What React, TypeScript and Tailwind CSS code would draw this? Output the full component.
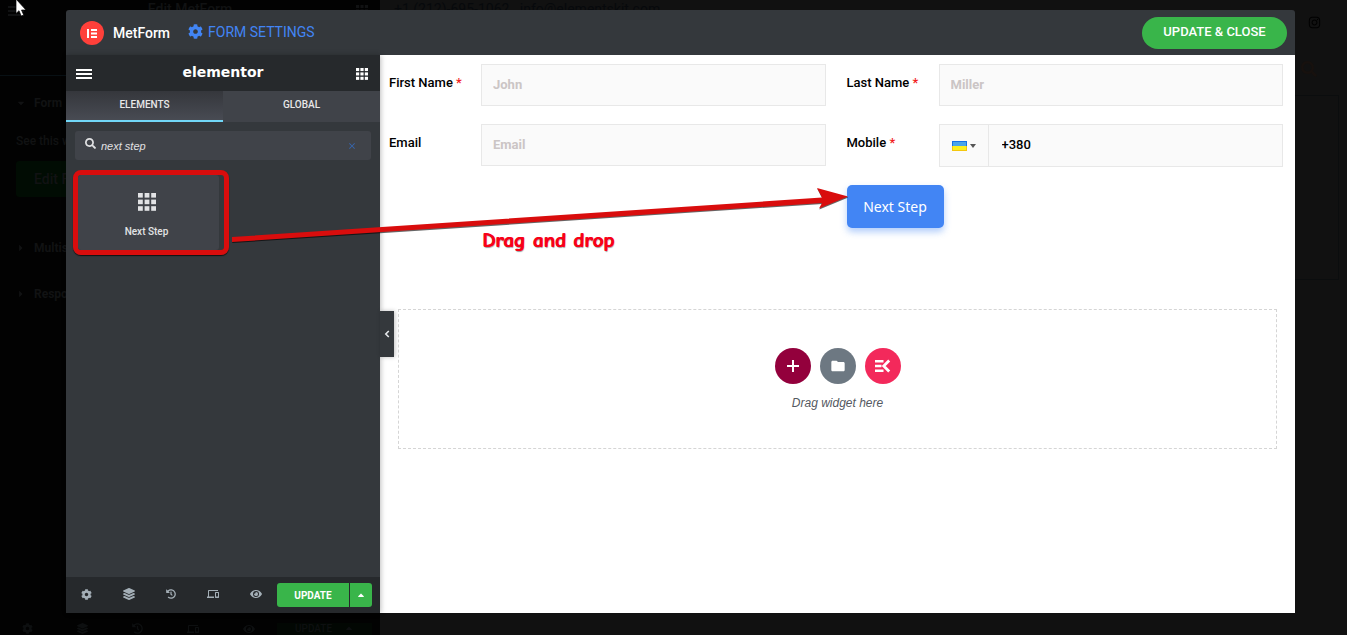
import type { ReactNode } from "react";
import {
  FaCaretDown,
  FaCaretRight,
  FaCaretUp,
  FaCog,
  FaEye,
  FaHistory,
  FaInstagram,
  FaLayerGroup,
  FaSearch,
} from "react-icons/fa";
import { MdClose, MdDevices, MdFolder } from "react-icons/md";

function AppsIcon({ className }: { className: string }) {
  return (
    <svg viewBox="0 0 18 18" className={className} fill="currentColor" aria-hidden="true">
      {[0, 6.6, 13.2].map((y) =>
        [0, 6.6, 13.2].map((x) => <rect key={`${x}-${y}`} x={x} y={y} width="4.8" height="4.6" />),
      )}
    </svg>
  );
}

function MenuIcon({ className }: { className: string }) {
  return (
    <svg viewBox="0 0 16 12" className={className} fill="currentColor" aria-hidden="true">
      <path d="M0 1h16v2H0zM0 5h16v2H0zM0 9h16v2H0z" />
    </svg>
  );
}

function ElementorMark() {
  return (
    <svg viewBox="0 0 24 24" className="size-6" aria-hidden="true">
      <circle cx="12" cy="12" r="12" fill="#ff403a" />
      <path d="M7 8h2v9H7zM11 8h6v2h-6zM11 11.5h6v2h-6zM11 15h6v2h-6z" fill="#fff" />
    </svg>
  );
}

function KitMark() {
  return (
    <svg viewBox="0 0 16 14" className="h-[14px] w-4" fill="none" stroke="#fff" aria-hidden="true">
      <path d="M0 2.2h8.5M0 7h6.5M0 11.8h8.5" strokeWidth="2.4" />
      <path d="M14.2 1.4 8.7 7l5.5 5.6" strokeWidth="2.8" />
    </svg>
  );
}

function Flag() {
  return (
    <svg viewBox="0 0 15 10" className="h-[10px] w-[15px]" aria-hidden="true">
      <rect width="15" height="5" fill="#1672e6" />
      <rect y="5" width="15" height="5" fill="#f4c70f" />
      <rect x="1" y="1" width="13" height="4" fill="#4aa5ea" />
      <rect x="1" y="5" width="13" height="4" fill="#fdf01d" />
    </svg>
  );
}

function Backdrop() {
  return (
    <div className="absolute inset-0 flex overflow-hidden bg-[#111111] text-[#101112]" aria-hidden="true">
      <div className="flex w-[380px] shrink-0 flex-col bg-[#020202] text-xs font-medium text-[#111213]">
        <div className="flex h-[76px] items-start justify-between border-b border-[#081014] pr-3 pl-2">
          <MenuIcon className="mt-[5px] h-3 w-4" />
          <span className="pt-px text-sm leading-4">Edit MetForm</span>
          <AppsIcon className="mt-[5px] size-3" />
        </div>
        <div className="flex h-[54px] items-center gap-2 pl-4">
          <FaCaretDown className="size-[10px]" />
          <span className="font-bold">Form</span>
        </div>
        <p className="pl-4 leading-[22px]">See this widget</p>
        <div className="mt-[9px] ml-4 flex h-9 w-40 items-center rounded-[3px] bg-[#010c03] pl-[18px] text-sm">
          Edit Form
        </div>
        <div className="mt-7 flex h-[46px] items-center gap-2 pl-4">
          <FaCaretRight className="size-[10px]" />
          <span className="font-bold">Multistep</span>
        </div>
        <div className="flex h-[46px] items-center gap-2 pl-4">
          <FaCaretRight className="size-[10px]" />
          <span className="font-bold">Response</span>
        </div>
        <div className="mt-auto flex h-[22px] items-end overflow-hidden pr-2 text-[#0d0f10]">
          <div className="flex flex-1 justify-around">
            <FaCog className="size-[11px]" />
            <FaLayerGroup className="size-[11px]" />
            <FaHistory className="size-[11px]" />
            <MdDevices className="size-3" />
            <FaEye className="size-3" />
          </div>
          <span className="flex w-[95px] justify-between bg-[#020703] px-[18px] text-[10px] leading-3">
            UPDATE
            <FaCaretUp className="size-[10px]" />
          </span>
        </div>
      </div>
      <div className="flex min-w-0 flex-1 justify-between pl-[14px] text-[#07090c]">
        <span className="pt-px text-sm leading-4">+1 (212)-695-1062 &nbsp; info@elementskit.com</span>
        <div className="flex w-[52px] flex-col pr-2">
          <FaInstagram className="mt-4 ml-[13px] size-[13px] text-black" />
          <FaSearch className="mt-8 ml-1.5 size-4 text-[#17110e]" />
          <div className="mt-[18px] h-[185px] border-y border-r border-[#0b0d0e]" />
        </div>
      </div>
    </div>
  );
}

function Field({
  id,
  label,
  required,
  children,
}: {
  id: string;
  label: string;
  required?: boolean;
  children: ReactNode;
}) {
  return (
    <div className="flex items-start">
      <label htmlFor={id} className="w-[92px] shrink-0 pt-[9px] text-[13px] leading-5 font-medium text-black">
        {label}
        {required && <span className="text-[#f21d1d]"> *</span>}
      </label>
      {children}
    </div>
  );
}

const inputClass =
  "h-[42px] min-w-0 flex-1 border border-[#e8e8e8] bg-[#fafafa] px-[11px] pb-0.5 text-[13px] font-bold text-black outline-none placeholder:text-[#cbc5c5]";

function WidgetPanel() {
  return (
    <aside className="relative z-10 flex w-[314px] shrink-0 flex-col bg-[#34383c] shadow-[1px_0_5px_rgba(0,0,0,0.25)]">
      <div className="flex h-9 items-center justify-between bg-[#26292c] px-[10px] text-white">
        <button type="button" aria-label="Menu" className="pt-0.5">
          <MenuIcon className="h-3 w-4" />
        </button>
        <span className="pb-0.5 font-['DejaVu_Sans',sans-serif] text-[14px] leading-4 font-bold">elementor</span>
        <button type="button" aria-label="Widgets" className="px-0.5 pt-px">
          <AppsIcon className="size-3" />
        </button>
      </div>
      <div className="grid h-[31px] grid-cols-2 text-[10px] font-medium text-[#e8e8e8]">
        <button
          type="button"
          className="border-b-2 border-[#71d7f7] bg-linear-to-b from-[#35373c] to-[#484b53] pb-0.5"
        >
          ELEMENTS
        </button>
        <button type="button" className="bg-[#404349] pb-1">
          GLOBAL
        </button>
      </div>
      <div className="mx-[9px] mt-[9px] flex h-[29px] shrink-0 items-center gap-[5px] rounded-[3px] bg-[#404349] px-[10px]">
        <FaSearch className="mb-1 size-[11px] text-[#e0e1e3]" />
        <input
          type="text"
          aria-label="Search widget"
          defaultValue="next step"
          className="min-w-0 flex-1 bg-transparent pt-0.5 font-['Liberation_Sans',sans-serif] text-[11px] text-[#e0e1e3] italic outline-none"
        />
        <button type="button" aria-label="Clear search" className="mr-1 text-[#3767b0]">
          <MdClose className="size-[10px]" />
        </button>
      </div>
      <div className="mt-[10px] ml-[7px] w-[156px] rounded-lg border-[5px] border-[#d90d0d] pr-[5px] shadow-[0_1px_1px_#111]">
        <button
          type="button"
          className="flex h-[75px] w-full flex-col items-center rounded-[3px] bg-[#404349] pt-[18px] pr-1 text-[#e2e3e5]"
        >
          <AppsIcon className="size-[18px]" />
          <span className="mt-[15px] text-[10px] leading-3 font-medium">Next Step</span>
        </button>
      </div>
      <div className="mt-auto flex h-9 items-center bg-[#26292c] pr-2 text-[#a4afb7]">
        <div className="flex flex-1 items-center justify-around pb-0.5">
          <button type="button" aria-label="Settings"><FaCog className="size-[11px]" /></button>
          <button type="button" aria-label="Navigator"><FaLayerGroup className="size-3" /></button>
          <button type="button" aria-label="History"><FaHistory className="size-[10px]" /></button>
          <button type="button" aria-label="Responsive mode"><MdDevices className="size-3" /></button>
          <button type="button" aria-label="Preview"><FaEye className="size-3" /></button>
        </div>
        <div className="flex h-6 gap-px text-white">
          <button type="button" className="w-[72px] rounded-l-[3px] bg-[#39b54a] text-[10px] font-bold">
            UPDATE
          </button>
          <button
            type="button"
            aria-label="Save options"
            className="flex w-[22px] items-center justify-center rounded-r-[3px] bg-[#39b54a]"
          >
            <FaCaretUp className="size-[10px]" />
          </button>
        </div>
      </div>
      <button
        type="button"
        aria-label="Hide panel"
        className="absolute top-[256px] left-full flex h-[46px] w-[14px] items-center justify-center bg-[#34383c] shadow-[1px_0_4px_rgba(0,0,0,0.25)]"
      >
        <svg viewBox="0 0 6 8" className="h-2 w-1.5" fill="none" stroke="#e6e9ec" strokeWidth="1.6" aria-hidden="true">
          <path d="M4.8 1 1.8 4l3 3" />
        </svg>
      </button>
    </aside>
  );
}

function Canvas() {
  return (
    <main className="flex min-w-0 flex-1 flex-col bg-white">
      <form className="grid grid-cols-2 gap-x-[21px] gap-y-[18px] pt-[9px] pr-3 pl-[9px]">
        <Field id="first-name" label="First Name" required>
          <input id="first-name" placeholder="John" className={inputClass} />
        </Field>
        <Field id="last-name" label="Last Name" required>
          <input id="last-name" placeholder="Miller" className={inputClass} />
        </Field>
        <Field id="email" label="Email">
          <input id="email" type="email" placeholder="Email" className={inputClass} />
        </Field>
        <Field id="mobile" label="Mobile" required>
          <div className="flex min-w-0 flex-1">
            <button
              type="button"
              aria-label="Country code"
              className="flex w-[49px] shrink-0 items-center justify-center gap-[3px] border border-r-0 border-[#e8e8e8] bg-[#fafafa] text-[#555]"
            >
              <Flag />
              <svg viewBox="0 0 6 4" className="h-1 w-1.5" fill="currentColor" aria-hidden="true">
                <path d="M0 0h6L3 4z" />
              </svg>
            </button>
            <input
              id="mobile"
              type="tel"
              defaultValue="+380"
              className="h-[43px] min-w-0 flex-1 border border-[#e8e8e8] bg-[#fafafa] px-[13px] pb-0.5 text-[13px] font-medium text-black outline-none"
            />
          </div>
        </Field>
        <button
          type="button"
          className="col-start-2 h-[43px] w-[97px] rounded-[5px] bg-[#4285f4] font-['Noto_Sans',sans-serif] text-sm text-white shadow-[0_4px_7px_rgba(66,133,244,0.4)]"
        >
          Next Step
        </button>
      </form>
      <section className="mx-[18px] mt-[81px] flex h-[140px] flex-col items-center border border-dashed border-[#d5d5d5] pt-[38px]">
        <div className="flex gap-[9px]">
          <button
            type="button"
            aria-label="Add section"
            className="flex size-9 items-center justify-center rounded-full bg-[#93003c]"
          >
            <svg viewBox="0 0 12 12" className="size-3" fill="#fff" aria-hidden="true">
              <path d="M5 0h2v5h5v2H7v5H5V7H0V5h5z" />
            </svg>
          </button>
          <button
            type="button"
            aria-label="Add template"
            className="flex size-9 items-center justify-center rounded-full bg-[#6d7882] text-white"
          >
            <MdFolder className="size-4" />
          </button>
          <button
            type="button"
            aria-label="Template library"
            className="flex size-9 items-center justify-center rounded-full bg-[#f3295b]"
          >
            <KitMark />
          </button>
        </div>
        <p className="mt-[11px] font-['Liberation_Sans',sans-serif] text-xs leading-4 text-[#54595f] italic">
          Drag widget here
        </p>
      </section>
    </main>
  );
}

function Annotations() {
  return (
    <div className="pointer-events-none absolute inset-0 z-20 overflow-hidden">
      <svg className="absolute top-[176px] left-[164px] h-[60px] w-[624px]" viewBox="0 0 624 60" aria-hidden="true">
        <path d="M2 51 592 11.5 587 2 618 10.5 589 22.5 592 17 2 56z" fill="#00000099" transform="translate(.3 1)" />
        <path d="M2 51 592 11.5 587 2 618 10.5 589 22.5 592 17 2 56z" fill="#d90d0d" />
      </svg>
      <span className="absolute top-[218px] left-[416px] font-['Comic_Sans_MS','Comic_Neue','Lato',sans-serif] text-[21px] leading-6 font-black whitespace-nowrap text-[#f80018] [text-shadow:1px_0_0_#f80018,1px_1px_1px_#999]">
        Drag and drop
      </span>
    </div>
  );
}

export default function App() {
  return (
    <div className="relative flex min-h-screen flex-col overflow-hidden pt-[10px] pr-[52px] pb-[22px] pl-[66px] font-['Roboto','Liberation_Sans',sans-serif]">
      <Backdrop />
      <div className="relative flex flex-1 flex-col rounded-[3px] bg-[#34383c]">
        <header className="flex h-[45px] shrink-0 items-center pr-2 pl-[14px]">
          <ElementorMark />
          <h1 className="ml-[9px] text-sm font-medium text-white">MetForm</h1>
          <button type="button" className="ml-[18px] flex items-center gap-[5px] pb-0.5 text-sm text-[#4285f4]">
            <FaCog className="size-[15px]" />
            FORM SETTINGS
          </button>
          <button
            type="button"
            className="ml-auto h-8 w-[145px] rounded-full bg-[#39b54a] pb-0.5 text-[13px] font-medium text-white"
          >
            UPDATE &amp; CLOSE
          </button>
        </header>
        <div className="flex flex-1">
          <WidgetPanel />
          <Canvas />
        </div>
        <Annotations />
      </div>
      <svg className="absolute top-0 left-[15px] h-[18px] w-3" viewBox="0 0 12 18" aria-hidden="true">
        <path d="M1-1v14.5l3-2.8 2.2 5.3 2.5-1-2.2-5H11z" fill="#fff" stroke="#000" strokeWidth=".7" />
      </svg>
    </div>
  );
}
